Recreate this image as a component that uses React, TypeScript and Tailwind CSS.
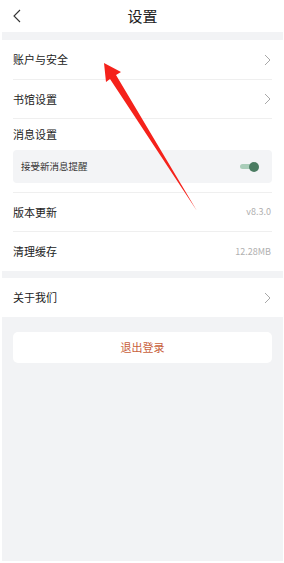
import React from "react";

const font = { fontFamily: '"Noto Sans CJK SC", "Noto Sans", sans-serif' };

// Right pointing chevron used by navigable rows
const Chevron = () => (
  <svg width="7" height="12" viewBox="0 0 7 12" fill="none">
    <path d="M1 1l5 5-5 5" stroke="#a8a8a8" strokeWidth="1" />
  </svg>
);

const Row = ({
  label,
  right,
  divider = true,
  h = "h-[39px]",
}: {
  label: string;
  right?: React.ReactNode;
  divider?: boolean;
  h?: string;
}) => (
  <div className="mx-[11px]">
    <div className={`${h} flex items-center justify-between pr-[1px]`}>
      <span className="text-[11px] text-[#222]">{label}</span>
      {right}
    </div>
    {divider && <div className="h-px bg-[#efefef]" />}
  </div>
);

export default function App() {
  return (
    <div className="w-[284px] h-[563px] bg-white relative overflow-hidden" style={font}>
      <div className="ml-[2px] w-[281px] h-[561px] bg-[#f2f3f5] flex flex-col">
        {/* =============== Header =============== */}
        <div className="h-[32px] bg-white relative flex items-center justify-center">
          <svg className="absolute left-[11px] top-[9px]" width="8" height="14" viewBox="0 0 8 14" fill="none">
            <path d="M7 1L1 7l6 6" stroke="#333" strokeWidth="1.1" />
          </svg>
          <span className="text-[15px] text-[#222]">设置</span>
        </div>

        {/* =============== Main settings =============== */}
        <div className="mt-[8px] bg-white">
          <Row label="账户与安全" right={<Chevron />} />
          <Row label="书馆设置" right={<Chevron />} h="h-[38px]" />
          <div className="mx-[11px]">
            <div className="h-[31px] flex items-center">
              <span className="text-[11px] text-[#222]">消息设置</span>
            </div>
            <div className="h-[33px] rounded-[4px] bg-[#f3f4f6] flex items-center justify-between pl-[8px] pr-[13px]">
              <span className="text-[9.5px] text-[#333]">接受新消息提醒</span>
              <div className="relative w-[19px] h-[10px] flex items-center">
                <div className="w-[18px] h-[5px] rounded-full bg-[#a9cdb9]" />
                <div className="absolute right-0 top-0 w-[10px] h-[10px] rounded-full bg-[#4b7c62]" />
              </div>
            </div>
            <div className="h-[9px]" />
            <div className="h-px bg-[#efefef]" />
          </div>
          <Row label="版本更新" right={<span className="text-[9px] text-[#b0b0b0]">v8.3.0</span>} h="h-[38px]" />
          <Row
            label="清理缓存"
            right={<span className="text-[9px] text-[#b0b0b0]">12.28MB</span>}
            divider={false}
          />
        </div>

        {/* =============== About =============== */}
        <div className="mt-[7px] bg-white">
          <Row label="关于我们" right={<Chevron />} divider={false} />
        </div>

        {/* =============== Logout =============== */}
        <div className="mt-[15px] mx-[11px] h-[31px] rounded-[5px] bg-white flex items-center justify-center">
          <span className="text-[11px] text-[#c8613c]">退出登录</span>
        </div>
      </div>

      {/* Red annotation arrow overlaying the list */}
      <svg className="absolute left-0 top-0 pointer-events-none" width="284" height="563" viewBox="0 0 284 563">
        <polygon
          points="104,63 121,72 116,75 197,211 110,79 106,82"
          fill="#f5221b"
        />
      </svg>
    </div>
  );
}
